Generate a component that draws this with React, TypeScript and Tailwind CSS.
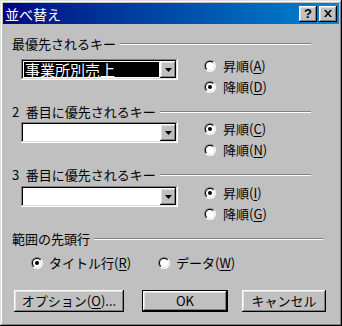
import { useId } from "react"

const raised =
  "shadow-[inset_-1px_-1px_#000,inset_1px_1px_#fff,inset_-2px_-2px_#808080,inset_2px_2px_#dfdfdf]"
const sunken =
  "shadow-[inset_-1px_-1px_#fff,inset_1px_1px_#808080,inset_-2px_-2px_#dfdfdf,inset_2px_2px_#000]"

function Radio({ checked }: { checked?: boolean }) {
  const id = useId().replace(/:/g, "")
  return (
    <svg width="12" height="12" viewBox="0 0 12 12" className="shrink-0">
      <defs>
        <linearGradient id={`o${id}`} x1="0" y1="0" x2="1" y2="1">
          <stop offset="0.5" stopColor="#808080" />
          <stop offset="0.5" stopColor="#ffffff" />
        </linearGradient>
        <linearGradient id={`i${id}`} x1="0" y1="0" x2="1" y2="1">
          <stop offset="0.5" stopColor="#000000" />
          <stop offset="0.5" stopColor="#dfdfdf" />
        </linearGradient>
      </defs>
      <circle cx="6" cy="6" r="6" fill={`url(#o${id})`} />
      <circle cx="6" cy="6" r="5" fill={`url(#i${id})`} />
      <circle cx="6" cy="6" r="4" fill="#fff" />
      {checked && <circle cx="6" cy="6" r="2" fill="#000" />}
    </svg>
  )
}

function Key({ label, k }: { label: string; k: string }) {
  return (
    <span>
      {label}(<span className="underline underline-offset-2">{k}</span>)
    </span>
  )
}

function GroupHeader({ title, width }: { title: React.ReactNode; width: string }) {
  return (
    <div className={`flex h-4 items-center gap-[4px] leading-4 ${width}`}>
      <span className="whitespace-pre">{title}</span>
      <div className="flex-1 border-t border-b border-t-[#808080] border-b-white" />
    </div>
  )
}

function Combo({ value }: { value?: string }) {
  return (
    <div className={`ml-[9px] mt-[4px] flex h-[21px] w-[157px] bg-white p-[2px] ${sunken}`}>
      <div className="flex-1 p-[1px]">
        {value && (
          <div className="flex h-full items-center bg-black pl-[1px] text-[15px] text-white leading-none">
            {value}
          </div>
        )}
      </div>
      <div className={`flex w-[16px] items-center justify-center bg-[#c0c0c0] ${raised}`}>
        <svg width="7" height="4" viewBox="0 0 7 4">
          <path d="M0 0h7L3.5 4z" fill="#000" />
        </svg>
      </div>
    </div>
  )
}

function SortRow({
  value,
  asc,
  desc,
  ascChecked,
}: {
  value?: string
  asc: string
  desc: string
  ascChecked: boolean
}) {
  return (
    <div className="flex items-start">
      <Combo value={value} />
      <div className="ml-[26px] flex flex-col">
        <div className="flex h-[21px] items-center gap-[7px]">
          <Radio checked={ascChecked} />
          <Key label="昇順" k={asc} />
        </div>
        <div className="flex h-[21px] items-center gap-[7px]">
          <Radio checked={!ascChecked} />
          <Key label="降順" k={desc} />
        </div>
      </div>
    </div>
  )
}

function Button({ children, primary, width }: { children: React.ReactNode; primary?: boolean; width: string }) {
  return (
    <div className={`h-[22px] ${width} ${primary ? "border border-black" : ""}`}>
      <div className={`flex h-full items-center justify-center bg-[#c0c0c0] ${raised}`}>{children}</div>
    </div>
  )
}

export default function App() {
  return (
    <div
      className={`flex h-[326px] w-[342px] flex-col bg-[#c0c0c0] p-[3px] text-[13px] text-black font-['Noto_Sans_CJK_JP',sans-serif] shadow-[inset_-1px_-1px_#000,inset_1px_1px_#dfdfdf,inset_-2px_-2px_#808080,inset_2px_2px_#fff]`}
    >
      <div className="flex h-[21px] items-center bg-gradient-to-r from-[#000080] to-[#1084d0] pl-[2px] pr-[2px]">
        <span className="flex-1 text-[14px] leading-none text-white">並べ替え</span>
        <div className={`flex h-[16px] w-[18px] items-center justify-center bg-[#c0c0c0] ${raised}`}>
          <span className="font-['Liberation_Sans',sans-serif] text-[13px] font-bold leading-none">?</span>
        </div>
        <div className={`ml-[2px] flex h-[16px] w-[18px] items-center justify-center bg-[#c0c0c0] ${raised}`}>
          <svg width="8" height="7" viewBox="0 0 8 7">
            <path d="M0 0h2l2 2.5L6 0h2L5 3.5 8 7H6L4 4.5 2 7H0l3-3.5z" fill="#000" />
          </svg>
        </div>
      </div>

      <div className="flex flex-col pl-[9px]">
        <div className="mt-[12px]">
          <GroupHeader title="最優先されるキー" width="w-[299px]" />
        </div>
        <div className="mt-[3px]">
          <SortRow value="事業所別売上" asc="A" desc="D" ascChecked={false} />
        </div>

        <div className="mt-[7px]">
          <GroupHeader title={"2\u2002番目に優先されるキー"} width="w-[299px]" />
        </div>
        <div className="-mt-[2px]">
          <SortRow asc="C" desc="N" ascChecked />
        </div>

        <div className="mt-[7px]">
          <GroupHeader title={"3\u2002番目に優先されるキー"} width="w-[299px]" />
        </div>
        <div className="-mt-[1px]">
          <SortRow asc="I" desc="G" ascChecked />
        </div>

        <div className="mt-[7px]">
          <GroupHeader title="範囲の先頭行" width="w-[311px]" />
        </div>
        <div className="mt-[5px] flex h-[21px] items-center">
          <div className="ml-[19px] flex w-[127px] items-center gap-[6px]">
            <Radio checked />
            <Key label="タイトル行" k="R" />
          </div>
          <div className="flex items-center gap-[6px]">
            <Radio />
            <Key label="データ" k="W" />
          </div>
        </div>

        <div className="mt-[17px] flex">
          <div className="ml-[2px]">
            <Button width="w-[110px]">
              <span>
                オプション(<span className="underline underline-offset-2">O</span>)...
              </span>
            </Button>
          </div>
          <div className="ml-[18px]">
            <Button primary width="w-[86px]">
              OK
            </Button>
          </div>
          <div className="ml-[14px]">
            <Button width="w-[84px]">キャンセル</Button>
          </div>
        </div>
      </div>
    </div>
  )
}
